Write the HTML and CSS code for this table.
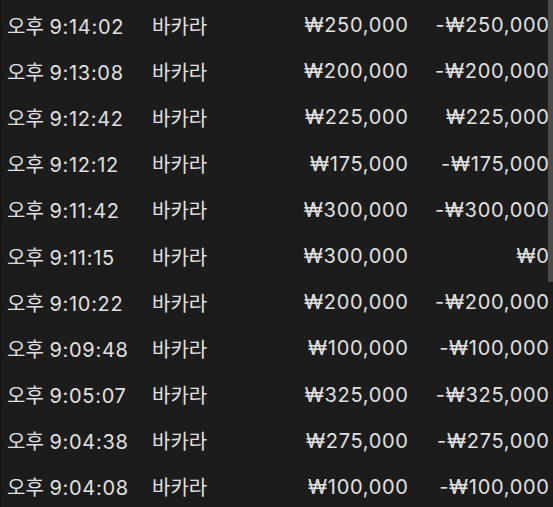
FILE: index.html
```html
<!DOCTYPE html>
<html lang="ko">
<head>
<meta charset="utf-8">
<link rel="stylesheet" href="styles.css">
</head>
<body>
<div class="panel">
  <div class="list">
    <div class="row"><span class="time">오후 <span class="num">9:14:02</span></span><span class="game">바카라</span><span class="bet num">₩250,000</span><span class="win num">-₩250,000</span></div>
    <div class="row"><span class="time">오후 <span class="num">9:13:08</span></span><span class="game">바카라</span><span class="bet num">₩200,000</span><span class="win num">-₩200,000</span></div>
    <div class="row"><span class="time">오후 <span class="num">9:12:42</span></span><span class="game">바카라</span><span class="bet num">₩225,000</span><span class="win num">₩225,000</span></div>
    <div class="row"><span class="time">오후 <span class="num">9:12:12</span></span><span class="game">바카라</span><span class="bet num">₩175,000</span><span class="win num">-₩175,000</span></div>
    <div class="row"><span class="time">오후 <span class="num">9:11:42</span></span><span class="game">바카라</span><span class="bet num">₩300,000</span><span class="win num">-₩300,000</span></div>
    <div class="row"><span class="time">오후 <span class="num">9:11:15</span></span><span class="game">바카라</span><span class="bet num">₩300,000</span><span class="win num">₩0</span></div>
    <div class="row"><span class="time">오후 <span class="num">9:10:22</span></span><span class="game">바카라</span><span class="bet num">₩200,000</span><span class="win num">-₩200,000</span></div>
    <div class="row"><span class="time">오후 <span class="num">9:09:48</span></span><span class="game">바카라</span><span class="bet num">₩100,000</span><span class="win num">-₩100,000</span></div>
    <div class="row"><span class="time">오후 <span class="num">9:05:07</span></span><span class="game">바카라</span><span class="bet num">₩325,000</span><span class="win num">-₩325,000</span></div>
    <div class="row"><span class="time">오후 <span class="num">9:04:38</span></span><span class="game">바카라</span><span class="bet num">₩275,000</span><span class="win num">-₩275,000</span></div>
    <div class="row"><span class="time">오후 <span class="num">9:04:08</span></span><span class="game">바카라</span><span class="bet num">₩100,000</span><span class="win num">-₩100,000</span></div>
  </div>
  <div class="scrollbar"></div>
</div>
</body>
</html>
```

FILE: styles.css
```css
html, body {
  margin: 0;
  padding: 0;
  background: #1c1c1c;
}
body {
  width: 553px;
  height: 507px;
  overflow: hidden;
}
.panel {
  position: relative;
  height: 507px;
  border-left: 2px solid #151515;
  box-sizing: border-box;
  font-family: Inter, "Noto Sans CJK KR", sans-serif;
  font-size: 20px;
  color: #e0e0e0;
}
.list {
  padding-top: 2px;
  padding-left: 5px;
}
.row {
  display: grid;
  grid-template-columns: 145px 130px 126px 141px;
  height: 46.2px;
  align-items: center;
  white-space: nowrap;
}
.num {
  letter-spacing: 0.7px;
}
.bet, .win {
  text-align: right;
  margin-right: -0.7px;
}
.scrollbar {
  position: absolute;
  top: 0;
  right: 0;
  width: 5px;
  height: 282px;
  background: #4a4a4a;
}
```
